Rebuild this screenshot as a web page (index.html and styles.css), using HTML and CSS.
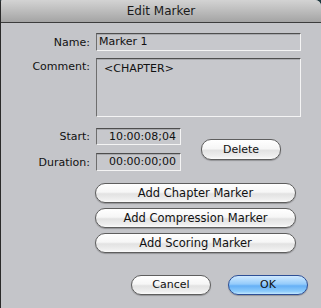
FILE: index.html
```html
<!DOCTYPE html>
<html>
<head>
<meta charset="utf-8">
<link rel="stylesheet" href="styles.css">
</head>
<body>
<div class="window">
  <div class="titlebar">Edit Marker</div>
  <div class="content">
    <div class="row name-row">
      <div class="label">Name:</div>
      <div class="field name-field">Marker 1</div>
    </div>
    <div class="row comment-row">
      <div class="label comment-label">Comment:</div>
      <div class="field comment-field">&lt;CHAPTER&gt;</div>
    </div>
    <div class="time-block">
      <div class="time-fields">
        <div class="row">
          <div class="label">Start:</div>
          <div class="field time-field start-field">10:00:08;04</div>
        </div>
        <div class="row">
          <div class="label">Duration:</div>
          <div class="field time-field">00:00:00;00</div>
        </div>
      </div>
      <div class="btn delete-btn">Delete</div>
    </div>
    <div class="add-buttons">
      <div class="btn wide-btn">Add Chapter Marker</div>
      <div class="btn wide-btn">Add Compression Marker</div>
      <div class="btn wide-btn">Add Scoring Marker</div>
    </div>
    <div class="footer">
      <div class="btn footer-btn">Cancel</div>
      <div class="btn footer-btn ok-btn">OK</div>
    </div>
  </div>
</div>
</body>
</html>
```
FILE: styles.css
```css
html, body {
  margin: 0;
  padding: 0;
  background: #1f3a40;
}
body {
  font-family: "DejaVu Sans", "Liberation Sans", sans-serif;
  font-size: 11px;
  color: #111;
}
.window {
  width: 321px;
  height: 308px;
  box-sizing: border-box;
  background: #c4c5c9;
  border-left: 1px solid #2a2a2a;
  border-top-left-radius: 2px;
  border-top-right-radius: 6px;
  overflow: hidden;
}
.titlebar {
  height: 22px;
  line-height: 22px;
  text-align: center;
  font-size: 12px;
  color: #1a1a1a;
  background: linear-gradient(#d3d3d3, #bcbcbc 50%, #a4a4a4);
  border-bottom: 1px solid #3c3c3c;
}
.content {
  display: flex;
  flex-direction: column;
  padding-top: 10px;
}
.row {
  display: flex;
  align-items: center;
  gap: 6px;
}
.label {
  width: 89px;
  text-align: right;
  flex: none;
}
.field {
  box-sizing: border-box;
  background: #c7c8cc;
  border-top: 1px solid #4e4e4e;
  border-left: 1px solid #6e6e6e;
  border-right: 1px solid #f4f4f4;
  border-bottom: 1px solid #f4f4f4;
  box-shadow: inset 0 1px 0 #a8a9ad;
  padding-left: 2px;
}
.name-field {
  width: 205px;
  height: 18px;
  line-height: 16px;
}
.comment-row {
  margin-top: 7px;
  align-items: flex-start;
}
.comment-label {
  padding-top: 2px;
}
.comment-field {
  width: 205px;
  height: 59px;
  padding-left: 7px;
  padding-top: 3px;
}
.time-block {
  display: flex;
  align-items: center;
  margin-top: 11px;
}
.time-fields {
  display: flex;
  flex-direction: column;
  gap: 8px;
}
.time-field {
  width: 85px;
  height: 18px;
  line-height: 16px;
  text-align: right;
  padding-right: 4px;
}
.start-field {
  height: 17px;
  line-height: 15px;
}
.btn {
  box-sizing: border-box;
  height: 21px;
  line-height: 19px;
  text-align: center;
  border: 1px solid #5e5e5e;
  border-radius: 10px;
  background: linear-gradient(#ffffff, #f6f6f6 45%, #e2e2e2 55%, #eeeeee 85%, #fbfbfb);
  box-shadow: 0 1px 1px rgba(0,0,0,0.25);
  color: #111;
}
.delete-btn {
  width: 80px;
  margin-left: 20px;
}
.add-buttons {
  display: flex;
  flex-direction: column;
  gap: 5px;
  margin-top: 12px;
  padding-left: 94px;
}
.wide-btn {
  width: 201px;
  height: 20px;
  line-height: 18px;
  font-size: 11.5px;
}
.footer {
  display: flex;
  gap: 17px;
  margin-top: 22px;
  padding-left: 130px;
}
.footer-btn {
  width: 80px;
  height: 20px;
  line-height: 18px;
}
.ok-btn {
  border-color: #2d4f96;
  background: linear-gradient(#cfe9ff, #94cbfb 45%, #66b0f6 55%, #8ccbfb 85%, #c2e7ff);
}
```
